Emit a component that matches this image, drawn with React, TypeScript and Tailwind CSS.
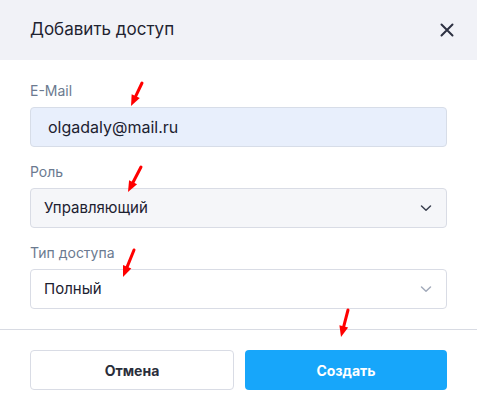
import React from "react";

const Chevron = ({ light }: { light?: boolean }) => (
  <svg
    width="12"
    height="8"
    viewBox="0 0 12 8"
    fill="none"
    className={light ? "text-[#a3abbb]" : "text-[#3a4050]"}
  >
    <path d="M1.5 2 6 6.2 10.5 2" stroke="currentColor" strokeWidth="1.5" strokeLinecap="round" strokeLinejoin="round" />
  </svg>
);

const Arrow = ({ x1, y1, x2, y2 }: { x1: number; y1: number; x2: number; y2: number }) => {
  const dx = x2 - x1;
  const dy = y2 - y1;
  const len = Math.sqrt(dx * dx + dy * dy);
  const ux = dx / len;
  const uy = dy / len;
  const head = 11;
  const bx = x2 - ux * head;
  const by = y2 - uy * head;
  const px = -uy * 4.5;
  const py = ux * 4.5;
  return (
    <g>
      <line x1={x1} y1={y1} x2={bx} y2={by} stroke="#ff0000" strokeWidth="3" strokeLinecap="round" />
      <polygon points={`${x2},${y2} ${bx + px},${by + py} ${bx - px},${by - py}`} fill="#ff0000" />
    </g>
  );
};

const Label = ({ children }: { children: React.ReactNode }) => (
  <div className="text-[14px] leading-[20px] text-[#6b7a90] mb-[6px]">{children}</div>
);

export default function App() {
  return (
    <div className="relative w-[477px] h-[408px] bg-white font-['Inter','Noto_Sans',sans-serif] overflow-hidden">
      <div className="h-[60px] bg-[#f1f2f7] flex items-center justify-between pl-[30px] pr-[22px]">
        <h2 className="text-[17px] text-[#1f2330] font-normal">Добавить доступ</h2>
        <button className="w-[16px] h-[16px] flex items-center justify-center">
          <svg width="14" height="14" viewBox="0 0 14 14" fill="none">
            <path d="M1.5 1.5 12.5 12.5M12.5 1.5 1.5 12.5" stroke="#2d3142" strokeWidth="2" strokeLinecap="round" />
          </svg>
        </button>
      </div>

      <div className="px-[30px] pt-[21px]">
        <Label>E-Mail</Label>
        <div className="h-[40px] rounded-[4px] border border-[#d7dde8] bg-[#e8effc] flex items-center pl-[17px] text-[16px] text-[#1c2130]">
          olgadaly@mail.ru
        </div>

        <div className="mt-[15px]">
          <Label>Роль</Label>
          <div className="h-[40px] rounded-[4px] border border-[#d9dce5] bg-[#f5f6f9] flex items-center justify-between pl-[13px] pr-[14px] text-[15px] text-[#1c2130]">
            <span>Управляющий</span>
            <Chevron />
          </div>
        </div>

        <div className="mt-[15px]">
          <Label>Тип доступа</Label>
          <div className="h-[40px] rounded-[4px] border border-[#d9dce5] bg-white flex items-center justify-between pl-[13px] pr-[14px] text-[15px] text-[#1c2130]">
            <span>Полный</span>
            <Chevron light />
          </div>
        </div>
      </div>

      <div className="mt-[20px] border-t border-[#d8dbe3]" />

      <div className="px-[30px] pt-[20px] flex gap-[11px]">
        <button className="flex-1 h-[40px] rounded-[4px] border border-[#d9dce5] bg-white text-[14px] font-bold text-[#2a2e3a]">
          Отмена
        </button>
        <button className="flex-1 h-[40px] rounded-[4px] bg-[#17a6fa] text-[14px] font-bold text-white">
          Создать
        </button>
      </div>

      <svg className="absolute inset-0 pointer-events-none" width="477" height="408">
        <Arrow x1={142} y1={83} x2={131} y2={106} />
        <Arrow x1={141} y1={167} x2={128} y2={192} />
        <Arrow x1={134} y1={250} x2={123} y2={277} />
        <Arrow x1={348} y1={310} x2={341} y2={337} />
      </svg>
    </div>
  );
}
